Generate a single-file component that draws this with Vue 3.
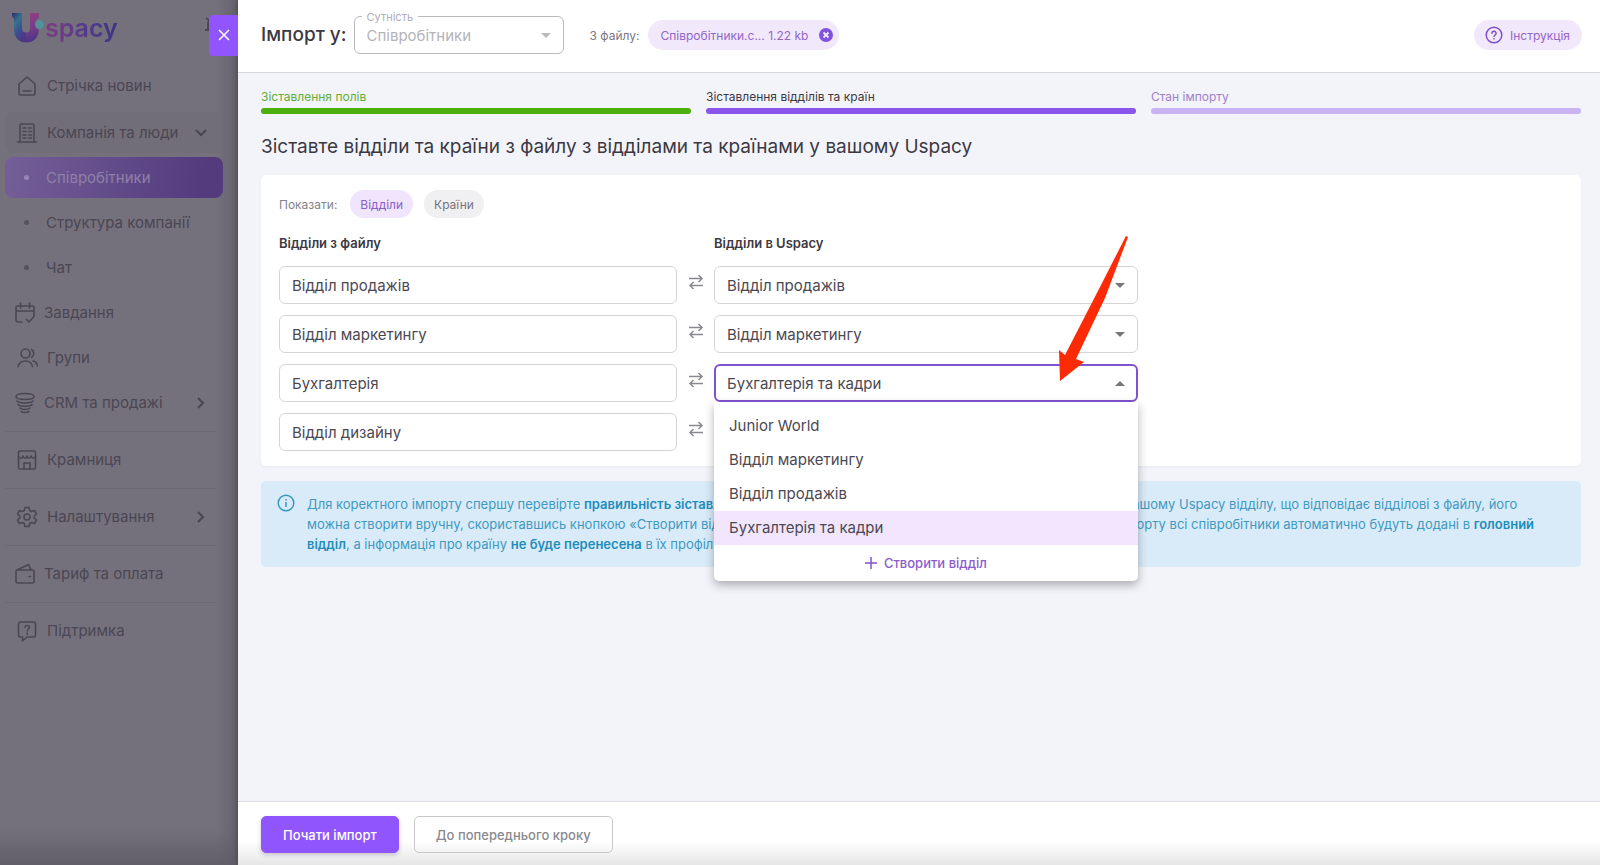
<template>
  <div class="app">
    <aside class="sidebar">
      <div class="logo">
        <svg width="34" height="32" viewBox="0 0 34 32">
          <defs>
            <linearGradient id="logoLeft" x1="0" y1="0" x2="0.6" y2="1">
              <stop offset="0" stop-color="#2b2a6e" />
              <stop offset="0.35" stop-color="#35738f" />
              <stop offset="0.7" stop-color="#3f4a91" />
              <stop offset="1" stop-color="#4d3683" />
            </linearGradient>
            <linearGradient id="logoRight" x1="0.3" y1="0" x2="0.5" y2="1">
              <stop offset="0" stop-color="#8f3f80" />
              <stop offset="0.5" stop-color="#7a3c88" />
              <stop offset="1" stop-color="#453587" />
            </linearGradient>
          </defs>
          <path d="M1 1h10v15c0 3 1.500 4.500 4 4.500v10C7 30.500 3 25 3 17V7C1.500 6 1 4 1 1z" fill="url(#logoLeft)" />
          <path d="M19 1h9v5a6.500 6.500 0 0 0 0 12c-1 8-5 12.500-13 12.500v-10c3 0 4-1.500 4-4.500z" fill="url(#logoRight)" />
          <circle cx="28.500" cy="12.500" r="4.200" fill="#4f949b" />
        </svg>
        <span class="logo-text">spacy</span>
        <svg class="bell" width="20" height="20" viewBox="0 0 20 20">
          <path d="M4 14V8a6 6 0 0 1 12 0v6M1 14h18M2 2l4 3" />
        </svg>
      </div>
      <nav>
        <a
          v-for="item in menu"
          :key="item.title"
          href="#"
          class="nav-item"
          :class="{ sub: item.sub, active: item.active, open: item.open, divided: item.divided, first: item.first, tight: item.tight }"
        >
          <span class="nav-box">
            <span v-if="item.sub" class="dot"></span>
            <svg v-else class="nav-icon" width="22" height="22" viewBox="0 0 22 22">
              <path v-for="d in item.icon" :key="d" :d="d" />
            </svg>
            <span class="nav-title">{{ item.title }}</span>
            <svg v-if="item.arrow" class="chevron" :class="item.arrow" width="14" height="14" viewBox="0 0 14 14">
              <path d="M4 2l5 5-5 5" />
            </svg>
          </span>
        </a>
      </nav>
    </aside>

    <main class="drawer">
      <button class="close" aria-label="Закрити">
        <svg width="12" height="12" viewBox="0 0 12 12"><path d="M1 1l10 10M11 1L1 11" /></svg>
      </button>

      <header class="header">
        <h1>Імпорт у:</h1>
        <div class="entity">
          <label for="entity">Сутність</label>
          <select id="entity" disabled>
            <option>Співробітники</option>
          </select>
          <svg class="caret" width="10" height="5" viewBox="0 0 10 5"><path d="M0 0h10L5 5z" /></svg>
        </div>
        <span class="from-file">З файлу:</span>
        <span class="chip file-chip">
          Співробітники.с... 1.22 kb
          <button class="remove" aria-label="Видалити файл">
            <svg width="14" height="14" viewBox="0 0 14 14">
              <circle cx="7" cy="7" r="7" fill="#8152dd" />
              <path d="M4.500 4.500l5 5M9.500 4.500l-5 5" stroke="#f5ebff" stroke-width="1.800" />
            </svg>
          </button>
        </span>
        <button class="chip help-chip">
          <svg width="18" height="18" viewBox="0 0 18 18" fill="none" stroke="#7f4fc4" stroke-width="1.500">
            <circle cx="9" cy="9" r="7.800" />
            <path d="M6.900 7.200a2.100 2.100 0 1 1 3.100 1.900c-.7.400-1 .7-1 1.400" stroke-linecap="round" />
            <path d="M9 12.200v1.300" />
          </svg>
          Інструкція
        </button>
      </header>

      <section class="content">
        <ol class="steps">
          <li v-for="step in steps" :key="step.title" :class="step.state">{{ step.title }}</li>
        </ol>
        <h2>Зіставте відділи та країни з файлу з відділами та країнами у вашому Uspacy</h2>

        <div class="card">
          <div class="filter">
            <span>Показати:</span>
            <button
              v-for="tab in tabs"
              :key="tab"
              class="tab"
              :class="{ selected: tab === activeTab }"
              @click="activeTab = tab"
            >{{ tab }}</button>
          </div>
          <div class="mapping titles">
            <strong>Відділи з файлу</strong>
            <span></span>
            <strong>Відділи в Uspacy</strong>
          </div>
          <div v-for="(row, i) in rows" :key="row.file" class="mapping row">
            <input type="text" :value="row.file" :aria-label="'Відділ з файлу ' + (i + 1)" readonly />
            <svg class="swap" width="16" height="18" viewBox="0 0 16 18">
              <path d="M1 5.500h13M10.500 2l3.500 3.500L10.500 9M15 12.500H2M5.500 9L2 12.500 5.500 16" />
            </svg>
            <div class="target">
              <select v-model="row.target" :class="{ focused: i === openRow }" :aria-label="'Відділ в Uspacy ' + (i + 1)">
                <option v-for="option in options" :key="option">{{ option }}</option>
              </select>
              <svg class="caret" :class="{ up: i === openRow }" width="10" height="5" viewBox="0 0 10 5"><path d="M0 0h10L5 5z" /></svg>
              <div v-if="i === openRow" class="menu">
                <ul role="listbox">
                  <li
                    v-for="option in options"
                    :key="option"
                    role="option"
                    :aria-selected="option === row.target"
                    :class="{ selected: option === row.target }"
                    @click="row.target = option"
                  >{{ option }}</li>
                </ul>
                <button class="create">
                  <svg width="12" height="12" viewBox="0 0 12 12"><path d="M6 0v12M0 6h12" /></svg>
                  Створити відділ
                </button>
              </div>
              <svg v-if="i === openRow" class="pointer" width="80" height="150" viewBox="0 0 80 150">
                <path d="M75 2L77 3 54 64 25 125 33 128 9 147 8 116 14 121 49 53z" />
              </svg>
            </div>
          </div>
        </div>

        <div class="info">
          <svg width="18" height="18" viewBox="0 0 18 18" fill="none" stroke="#3299be" stroke-width="1.500">
            <circle cx="9" cy="9" r="7.800" />
            <path d="M9 8v5M9 5v1.500" />
          </svg>
          <p>
            Для коректного імпорту спершу перевірте <b>правильність зіставлення відділів та країн.</b>
            Якщо ви ще досі не маєте створеного у вашому Uspacy відділу, що відповідає відділові з файлу, його
            можна створити вручну, скориставшись кнопкою «Створити відділ». Якщо цього не зробити або не
            зіставити країни, то після імпорту всі співробітники автоматично будуть додані в
            <b>головний відділ</b>, а інформація про країну <b>не буде перенесена</b> в їх профілі.
          </p>
        </div>
      </section>

      <footer class="footer">
        <button class="btn primary">Почати імпорт</button>
        <button class="btn">До попереднього кроку</button>
      </footer>
    </main>
  </div>
</template>

<script setup>
import { ref } from 'vue'

const menu = [
  { title: 'Стрічка новин', first: true, icon: ['M3 9l8-7 8 7v9.500a1.500 1.500 0 0 1-1.500 1.500h-13A1.500 1.500 0 0 1 3 18.500z', 'M7 16h8'] },
  {
    title: 'Компанія та люди',
    open: true,
    arrow: 'down',
    icon: ['M4 20V3.500A1.500 1.500 0 0 1 5.500 2h11A1.500 1.500 0 0 1 18 3.500V20M1.500 20h19', 'M7 6h3M7 9.500h3M7 13h3M12.500 6h3M12.500 9.500h3M12.500 13h3M7 16h3M12.500 16h3'],
  },
  { title: 'Співробітники', sub: true, active: true },
  { title: 'Структура компанії', sub: true },
  { title: 'Чат', sub: true },
  { title: 'Завдання', tight: true, icon: ['M8 20H4.500A2.500 2.500 0 0 1 2 17.500v-12A1.500 1.500 0 0 1 3.500 4h15A1.500 1.500 0 0 1 20 5.500V14M2 9h18M6.500 1v5M15.500 1v5', 'M12.500 17.500l2.500 2.500 5-5.500'] },
  { title: 'Групи', icon: ['M9.500 2a4.500 4.500 0 1 1 0 9 4.500 4.500 0 0 1 0-9z', 'M2 19.500c1-4 4-5.500 7.500-5.500s6 1.500 7 5.500M15.500 2.500c3 1.500 3 6.500 0 8M17 14c2.500.500 4 2.500 4.500 5'] },
  {
    title: 'CRM та продажі',
    tight: true,
    arrow: 'right',
    icon: ['M11 1.500c5 0 9 1.200 9 3s-4 3-9 3-9-1.200-9-3 4-3 9-3z', 'M3 9c2 2.600 14 2.600 16 0M4 12.500c2 2.400 12 2.400 14 0M6 16c2 2 8 2 10 0M7 19.500c2 1.300 6 1.300 8 0'],
  },
  { title: 'Крамниця', divided: true, icon: ['M4 2h14a1.500 1.500 0 0 1 1.500 1.500v15A1.500 1.500 0 0 1 18 20H4a1.500 1.500 0 0 1-1.500-1.500v-15A1.500 1.500 0 0 1 4 2z', 'M2.500 8c2 2 4 1 4.500-1 1 3 3.500 3 4 0 .500 3 3 3 4 0 .500 2 2.500 3 4.500 1M8 20v-6h6v6'] },
  {
    title: 'Налаштування',
    divided: true,
    arrow: 'right',
    icon: [
      'M9 1.500h4l.700 3 1.800 1 3-1 2 3.500-2.300 2v2l2.300 2-2 3.500-3-1-1.800 1-.700 3H9l-.700-3-1.800-1-3 1-2-3.500 2.300-2v-2l-2.300-2 2-3.500 3 1 1.800-1z',
      'M11 8a3 3 0 1 1 0 6 3 3 0 0 1 0-6z',
    ],
  },
  { title: 'Тариф та оплата', divided: true, tight: true, icon: ['M3.500 7h15A1.500 1.500 0 0 1 20 8.500v10a1.500 1.500 0 0 1-1.500 1.500h-15A1.500 1.500 0 0 1 2 18.500v-10A1.500 1.500 0 0 1 3.500 7zM3 7l11.500-5.500L17 7M15 13.500h1.500'] },
  {
    title: 'Підтримка',
    divided: true,
    icon: ['M4.500 2h13A2 2 0 0 1 19.500 4v11a2 2 0 0 1-2 2H11l-4.500 4v-4h-2a2 2 0 0 1-2-2V4a2 2 0 0 1 2-2z', 'M9 7.500c0-3 4.500-2.500 4.500 0 0 1.500-2.300 1.500-2.300 3.500M11.200 13v1.200'],
  },
]

const steps = [
  { title: 'Зіставлення полів', state: 'done' },
  { title: 'Зіставлення відділів та країн', state: 'current' },
  { title: 'Стан імпорту', state: 'next' },
]

const tabs = ['Відділи', 'Країни']
const activeTab = ref('Відділи')

const options = ['Junior World', 'Відділ маркетингу', 'Відділ продажів', 'Бухгалтерія та кадри']
const openRow = ref(2)
const rows = ref([
  { file: 'Відділ продажів', target: 'Відділ продажів' },
  { file: 'Відділ маркетингу', target: 'Відділ маркетингу' },
  { file: 'Бухгалтерія', target: 'Бухгалтерія та кадри' },
  { file: 'Відділ дизайну', target: '' },
])
</script>

<style>
body {
  margin: 0;
}
</style>

<style scoped>
* {
  box-sizing: border-box;
}
.app {
  display: flex;
  height: 100vh;
  font-family: Inter, "Liberation Sans", sans-serif;
  color: #3c3842;
  overflow: hidden;
}
button,
input,
select {
  font-family: inherit;
}
button {
  border: none;
  cursor: pointer;
}

/* sidebar */
.sidebar {
  width: 238px;
  flex-shrink: 0;
  background: linear-gradient(to top, #625e69, transparent 36px), linear-gradient(to left, #66626d, transparent 22px), #75717c;
}
.logo {
  display: flex;
  align-items: flex-start;
  height: 63px;
  padding: 12px 14px 0 11px;
}
.logo-text {
  font-size: 25px;
  line-height: 32px;
  font-weight: 600;
  color: transparent;
  background: linear-gradient(to right, #7d3d82, #553a8c 55%, #3b3484);
  background-clip: text;
}
.bell {
  margin: 4px 0 0 auto;
  fill: none;
  stroke: #4c4754;
  stroke-width: 2;
}
.nav-item {
  display: block;
  height: 45px;
  padding: 2px 15px 2px 5px;
  color: #4a4653;
  font-size: 15px;
  text-decoration: none;
}
.nav-item.first {
  margin-bottom: 2px;
}
.nav-item.divided {
  margin-top: 12px;
  position: relative;
}
.nav-item.divided::before {
  content: "";
  position: absolute;
  top: -6px;
  left: 5px;
  right: 22px;
  border-top: 1px solid #6d6974;
}
.nav-box {
  display: flex;
  align-items: center;
  height: 41px;
  padding: 0 15px 0 11px;
  border-radius: 8px;
}
.open .nav-box {
  background: #726e78;
}
.active .nav-box {
  color: #8f80a8;
  background: linear-gradient(100deg, #755f98, #533b7e 90%);
}
.nav-icon {
  margin-right: 9px;
  fill: none;
  stroke: #4a4653;
  stroke-width: 1.6;
  stroke-linecap: round;
  stroke-linejoin: round;
}
.tight .nav-box {
  padding-left: 9px;
}
.tight .nav-icon {
  margin-right: 8px;
}
.dot {
  width: 5px;
  height: 5px;
  margin: 0 17px 0 8px;
  border-radius: 50%;
  background: #57525f;
}
.active .dot {
  background: #9a86b8;
}
.nav-title {
  flex: 1;
  white-space: nowrap;
}
.chevron {
  fill: none;
  stroke: #4a4653;
  stroke-width: 2;
}
.chevron.down {
  transform: rotate(90deg);
}

/* drawer */
.drawer {
  position: relative;
  flex: 1;
  min-width: 0;
  display: flex;
  flex-direction: column;
  background: #f3f4fa;
  box-shadow: 0 0 6px rgba(0, 0, 0, .35);
}
.close {
  position: absolute;
  top: 15px;
  left: -29px;
  width: 29px;
  height: 41px;
  padding: 0;
  border-radius: 4px 0 0 4px;
  background: #9155fd;
}
.close path {
  stroke: #fff;
  stroke-width: 1.5;
}
.header {
  display: flex;
  align-items: center;
  height: 73px;
  padding: 0 18px 2px 23px;
  background: #fff;
  border-bottom: 1px solid #d8d6de;
}
h1 {
  margin: 0 7px 0 0;
  font-size: 19px;
  font-weight: 500;
  line-height: 24px;
}
.entity {
  position: relative;
  width: 210px;
}
.entity label {
  position: absolute;
  top: -6px;
  left: 8px;
  padding: 0 5px;
  background: #fff;
  font-size: 11px;
  line-height: 14px;
  color: #b0aeb4;
}
select,
input {
  display: block;
  width: 100%;
  height: 38px;
  padding: 0 12px;
  border: 1px solid #d5d4d8;
  border-radius: 6px;
  background: #fff;
  font-size: 15px;
  color: #4c4852;
  appearance: none;
  outline: none;
}
.entity select {
  border-color: #bab9bd;
  color: #b4b3b8;
  opacity: 1;
}
.caret {
  position: absolute;
  top: 17px;
  right: 13px;
  fill: #77757b;
  pointer-events: none;
}
.caret.up {
  transform: rotate(180deg);
}
.entity .caret {
  fill: #b9b8bc;
}
.from-file {
  margin: 0 9px 0 26px;
  font-size: 12px;
  color: #7c7983;
}
.chip {
  display: flex;
  align-items: center;
  height: 30px;
  border-radius: 15px;
  background: #f1e8fc;
  font-size: 12px;
  color: #9266c6;
}
.file-chip {
  padding: 0 6px 0 12px;
}
.remove {
  display: flex;
  margin-left: 11px;
  padding: 0;
  background: none;
}
.help-chip {
  margin-left: auto;
  padding: 0 12px 0 11px;
  gap: 7px;
}
.content {
  flex: 1;
  padding: 16px 19px 0 23px;
}
.steps {
  display: grid;
  grid-template-columns: repeat(3, 1fr);
  gap: 15px;
  margin: 0;
  padding: 0;
  list-style: none;
  font-size: 12px;
  line-height: 16px;
}
.steps li::after {
  content: "";
  display: block;
  height: 6px;
  margin-top: 3px;
  border-radius: 3px;
}
.done {
  color: #5fae35;
}
.done::after {
  background: #4caf0e;
}
.current::after {
  background: #8a55ea;
}
.next {
  color: #a07fc9;
}
.next::after {
  background: #cab3f2;
}
h2 {
  margin: 20px 0 16px;
  font-size: 19px;
  line-height: 25px;
  font-weight: 400;
}
.card {
  padding: 15px 18px;
  border-radius: 5px;
  background: #fff;
  box-shadow: 0 1px 3px rgba(60, 50, 80, .05);
}
.filter {
  display: flex;
  align-items: center;
  gap: 11px;
  font-size: 12px;
  color: #85828b;
}
.filter span {
  margin-right: 2px;
}
.tab {
  height: 28px;
  padding: 0 10px;
  border-radius: 14px;
  background: #f0eff1;
  font-size: 12px;
  color: #77747c;
}
.tab.selected {
  background: #f0e5fc;
  color: #8c5ccb;
}
.mapping {
  display: grid;
  grid-template-columns: 31% 37px 33%;
  align-items: center;
}
.titles {
  margin: 15px 0 13px;
  font-size: 13px;
  line-height: 20px;
}
.titles strong {
  font-weight: 600;
}
.row + .row {
  margin-top: 11px;
}
.swap {
  justify-self: center;
  margin-bottom: 6px;
  fill: none;
  stroke: #8b8990;
  stroke-width: 1.5;
}
.target {
  position: relative;
}
select.focused {
  padding: 0 11px;
  border: 2px solid #8152d0;
}
.menu {
  position: absolute;
  z-index: 2;
  top: 38px;
  left: 0;
  right: 0;
  padding-top: 7px;
  border-radius: 0 0 5px 5px;
  background: #fff;
  box-shadow: 0 4px 10px rgba(40, 35, 50, .35);
}
.menu ul {
  margin: 0;
  padding: 0;
  list-style: none;
}
.menu li {
  padding: 0 15px;
  font-size: 15px;
  line-height: 34px;
  color: #4c4852;
  cursor: pointer;
}
.menu li.selected {
  background: #f1e6fd;
}
.create {
  display: flex;
  align-items: center;
  justify-content: center;
  gap: 7px;
  width: 100%;
  height: 36px;
  border-radius: 5px;
  background: none;
  font-size: 13px;
  font-weight: 500;
  color: #8c5ccb;
}
.create path {
  stroke: #8152d0;
  stroke-width: 1.5;
}
.pointer {
  position: absolute;
  z-index: 3;
  top: -130px;
  right: 7px;
  fill: #fc2a05;
  pointer-events: none;
}
.info {
  display: flex;
  align-items: flex-start;
  gap: 12px;
  margin-top: 15px;
  padding: 13px 32px 13px 16px;
  border-radius: 5px;
  background: #d9ebf9;
  color: #4099bf;
}
.info svg {
  flex-shrink: 0;
}
.info p {
  margin: 0;
  font-size: 13px;
  line-height: 20px;
}
.info b {
  font-weight: 600;
  color: #218dba;
}
.footer {
  display: flex;
  gap: 15px;
  height: 64px;
  padding: 14px 23px 0;
  border-top: 1px solid #dcdbe0;
  background: linear-gradient(to top, #e6e6e6, #fff 24px);
}
.btn {
  height: 37px;
  padding: 0 21px;
  border: 1px solid #c9c8cc;
  border-radius: 5px;
  background: transparent;
  font-size: 13px;
  font-weight: 500;
  color: #8b8990;
}
.btn.primary {
  border-color: #9155fd;
  background: #9155fd;
  color: #fff;
  box-shadow: 0 2px 4px rgba(70, 50, 120, .25);
}
</style>
